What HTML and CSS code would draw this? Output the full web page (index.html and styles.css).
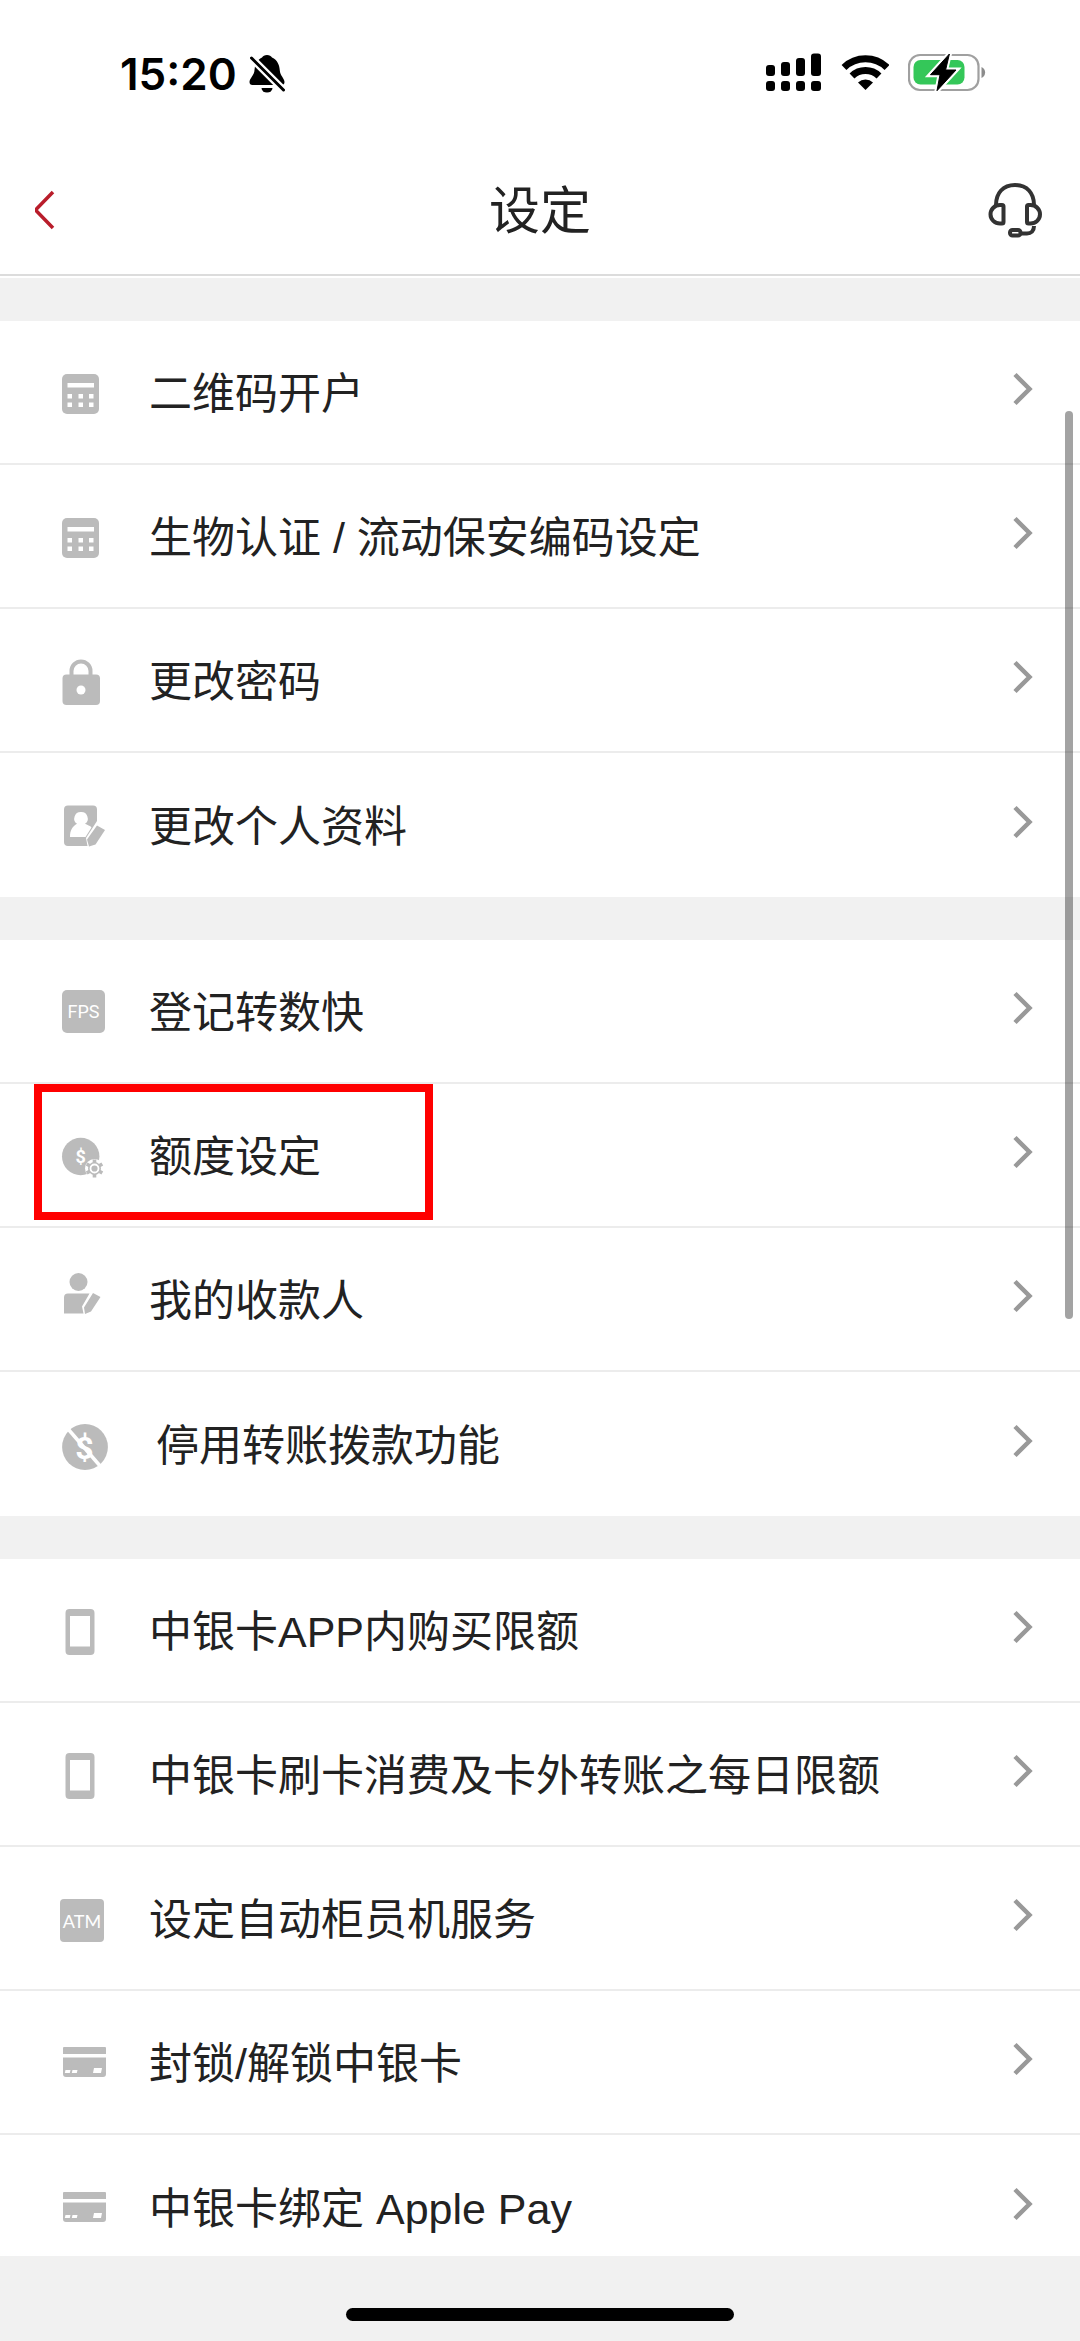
FILE: index.html
```html
<!DOCTYPE html>
<html lang="zh-CN">
<head>
<meta charset="utf-8">
<meta name="viewport" content="width=device-width, initial-scale=1">
<title>设定</title>
<link rel="stylesheet" href="styles.css">
</head>
<body>
<svg class="sprite" aria-hidden="true">
  <symbol id="chevron" viewBox="0 0 24 36"><path d="M3 3.500 17.500 18 3 32.500" fill="none" stroke="#999" stroke-width="4.500"/></symbol>
  <symbol id="calculator" viewBox="0 0 48 52">
    <rect x="2" y="8" width="37" height="40" rx="5" fill="#bbb"/>
    <path fill="#fff" d="M7.500 17h26.500v4.500H7.500zM7.500 28h4.500v4.500H7.500zM18.500 28h4.500v4.500h-4.500zM29 28h4.500v4.500H29zM7.500 36.500h4.500V41H7.500zM18.500 36.500h4.500V41h-4.500zM29 36.500h4.500V41H29z"/>
  </symbol>
  <symbol id="lock" viewBox="0 0 48 52">
    <rect x="2.500" y="20.500" width="37.500" height="30.500" rx="4" fill="#bbb"/>
    <path d="M11.500 24v-7a9.500 9.500 0 0 1 19 0v7" fill="none" stroke="#bbb" stroke-width="4"/>
    <circle cx="21" cy="36" r="4.500" fill="#fff"/>
  </symbol>
  <symbol id="profile" viewBox="0 0 48 52">
    <path fill="#bbb" d="M8 6.500h25a4 4 0 0 1 4 4V22L26 39l1.500 8H8a4 4 0 0 1-4-4V10.500a4 4 0 0 1 4-4z"/>
    <path fill="#bbb" d="M37 26.500 45 31 35.500 45.500 29 47.500l-2-7z"/>
    <path fill="#fff" d="M21 13a6.500 6.500 0 0 1 4 11.800c2 1.200 5.500 2 6.500 3.700L25.500 38H10c0-7 2.500-10.500 7-13.200A6.500 6.500 0 0 1 21 13z"/>
  </symbol>
  <symbol id="payee" viewBox="0 0 48 52">
    <circle cx="18.500" cy="9" r="9" fill="#bbb"/>
    <path fill="#bbb" d="M8 20.500h21.500L22 33.500l1.500 7H4v-16a4 4 0 0 1 4-4zM33 20l7.500 4L31 38.500 25 41l-1-6.500z"/>
  </symbol>
  <symbol id="phone" viewBox="0 0 48 52"><path fill="#bbb" fill-rule="evenodd" d="M9.500 5h21a4 4 0 0 1 4 4v38a4 4 0 0 1-4 4h-21a4 4 0 0 1-4-4V9a4 4 0 0 1 4-4zm.5 7v30.500h20V12z"/></symbol>
  <symbol id="card" viewBox="0 0 48 52">
    <path fill="#bbb" d="M4 11h41a1 1 0 0 1 1 1v6H3v-6a1 1 0 0 1 1-1zM3 21.500h43V38a3 3 0 0 1-3 3H6a3 3 0 0 1-3-3z"/>
    <path fill="#fff" d="M5.500 34h5l-.7 3h-5zM12.500 34h5l-.7 3h-5zM34 32h8l-1 5h-8z"/>
  </symbol>
</svg>

<div class="status-bar">
  <div class="status-left">
    <span class="clock">15:20</span>
    <svg width="36" height="40" viewBox="248 53 36 40" aria-label="静音">
      <path d="M266 55c2.500 0 4 1.200 5 2.500 5.500 2.500 7.500 7.500 7.800 13 .3 5 4.700 8 4.700 11.500 0 2-1 3-3 3h-29c-2 0-3-1-3-3 0-3.500 5-7 5-12 .3-5.500 2.500-10 7.500-12.500 1-1.300 2.500-2.500 5-2.500z"/>
      <path d="M260.500 88h11a5.500 4.500 0 0 1-11 0z"/>
      <path d="M249 56.500 284.500 92" stroke="#fff" stroke-width="7.500"/>
      <path d="M250.500 58 282.500 90" stroke="#000" stroke-width="3" stroke-linecap="round"/>
    </svg>
  </div>
  <div class="status-right">
    <svg width="56" height="40" viewBox="767 53 56 40" aria-label="信号">
      <rect x="767" y="65" width="9" height="11" rx="3"/><rect x="782" y="62" width="9" height="14" rx="3"/><rect x="797" y="58" width="9" height="18" rx="3"/><rect x="812" y="53.500" width="10" height="22.500" rx="3"/>
      <rect x="767" y="81" width="9" height="10" rx="3"/><rect x="782" y="81" width="9" height="10" rx="3"/><rect x="797" y="81" width="9" height="10" rx="3"/><rect x="812" y="81" width="10" height="10" rx="3"/>
    </svg>
    <svg width="48" height="40" viewBox="840 53 48 40" aria-label="Wi-Fi">
      <path fill="none" stroke="#000" stroke-width="7" d="M843 67.500a31 31 0 0 1 43 0M851 76a19.500 19.500 0 0 1 27 0"/>
      <path d="M864.500 90 857 82.500a11 11 0 0 1 15 0z"/>
    </svg>
    <svg width="78" height="40" viewBox="908 53 78 40" aria-label="充电中">
      <rect x="909" y="55" width="69.500" height="35" rx="11" fill="none" stroke="#a0a0a0" stroke-width="2.200"/>
      <path d="M981.500 67a6 6 0 0 1 0 11z" fill="#8c8c8c"/>
      <rect x="913.500" y="60" width="51" height="24.500" rx="7" fill="#34c759"/>
      <path d="M949.400 54 930.500 74.700H940L937 90.700 956 70H945.600z" stroke="#fff" stroke-width="5"/>
      <path d="M949.400 54 930.500 74.700H940L937 90.700 956 70H945.600z" stroke="#000" stroke-linejoin="round"/>
    </svg>
  </div>
</div>

<header class="title-bar">
  <button type="button" class="bar-button" aria-label="返回">
    <svg width="24" height="40" viewBox="3 0 24 40"><path d="M21 2 3.500 20 21 38" fill="none" stroke="#b91d2b" stroke-width="3.500"/></svg>
  </button>
  <h1>设定</h1>
  <button type="button" class="bar-button bar-button-end" aria-label="客户服务">
    <svg width="57" height="56" viewBox="988 182 57 56" fill="none" stroke="#333" stroke-width="4">
      <path d="M996 205c0-12 7-20 19-20s19 8 19 20M1034 226c0 5-3 7.500-7 7.500h-6"/>
      <path d="M1002 205h-2a9.500 9.300 0 0 0 0 18.600h2q1.500 0 1.500-1.500v-15.600q0-1.500-1.500-1.500zM1028.500 205h2a9.500 9.300 0 0 1 0 18.600h-2q-1.500 0-1.500-1.500v-15.600q0-1.500 1.500-1.500z"/>
      <rect x="1010" y="230" width="10.500" height="5.500" rx="2.500"/>
    </svg>
  </button>
</header>

<main class="content">
  <ul class="group">
    <li><a class="row" href="#"><svg class="icon"><use href="#calculator"/></svg><span class="label">二维码开户</span><svg class="chevron"><use href="#chevron"/></svg></a></li>
    <li><a class="row" href="#"><svg class="icon"><use href="#calculator"/></svg><span class="label">生物认证 / 流动保安编码设定</span><svg class="chevron"><use href="#chevron"/></svg></a></li>
    <li><a class="row" href="#"><svg class="icon"><use href="#lock"/></svg><span class="label">更改密码</span><svg class="chevron"><use href="#chevron"/></svg></a></li>
    <li><a class="row" href="#"><svg class="icon"><use href="#profile"/></svg><span class="label">更改个人资料</span><svg class="chevron"><use href="#chevron"/></svg></a></li>
  </ul>
  <ul class="group">
    <li><a class="row" href="#">
      <svg class="icon" viewBox="0 0 48 52">
        <rect x="2" y="5" width="43" height="43" rx="5" fill="#bbb"/>
        <text x="23.500" y="33" text-anchor="middle" class="glyph glyph-fps">FPS</text>
      </svg>
      <span class="label">登记转数快</span><svg class="chevron"><use href="#chevron"/></svg></a></li>
    <li><a class="row row-marked" href="#">
      <svg class="icon" viewBox="0 0 48 52">
        <circle cx="20.700" cy="27.500" r="18.700" fill="#bbb"/>
        <text x="20.700" y="34" text-anchor="middle" class="glyph glyph-dollar">$</text>
        <g transform="translate(34.500 39.500)">
          <circle r="9.500" fill="#fff"/>
          <path id="tooth" stroke="#bbb" stroke-width="3.600" d="M0-9v18M-7.800-4.500l15.600 9M-7.800 4.500l15.600-9"/>
          <circle r="6.500" fill="#bbb"/>
          <circle r="4" fill="none" stroke="#fff" stroke-width="1.800"/>
        </g>
      </svg>
      <span class="label">额度设定</span><svg class="chevron"><use href="#chevron"/></svg></a></li>
    <li><a class="row" href="#"><svg class="icon"><use href="#payee"/></svg><span class="label">我的收款人</span><svg class="chevron"><use href="#chevron"/></svg></a></li>
    <li><a class="row row-wide-icon" href="#">
      <svg class="icon" viewBox="0 0 48 52">
        <circle cx="25" cy="29" r="22.900" fill="#bbb"/>
        <path d="M8.500 11.500 41 49" stroke="#fff" stroke-width="3.500"/>
        <text x="24.500" y="41" text-anchor="middle" class="glyph glyph-big-dollar">$</text>
      </svg>
      <span class="label">停用转账拨款功能</span><svg class="chevron"><use href="#chevron"/></svg></a></li>
  </ul>
  <ul class="group">
    <li><a class="row" href="#"><svg class="icon"><use href="#phone"/></svg><span class="label">中银卡APP内购买限额</span><svg class="chevron"><use href="#chevron"/></svg></a></li>
    <li><a class="row" href="#"><svg class="icon"><use href="#phone"/></svg><span class="label">中银卡刷卡消费及卡外转账之每日限额</span><svg class="chevron"><use href="#chevron"/></svg></a></li>
    <li><a class="row" href="#">
      <svg class="icon" viewBox="0 0 48 52">
        <rect x="0" y="7" width="44" height="43" rx="4" fill="#bbb"/>
        <text x="22" y="36" text-anchor="middle" class="glyph glyph-atm">ATM</text>
      </svg>
      <span class="label">设定自动柜员机服务</span><svg class="chevron"><use href="#chevron"/></svg></a></li>
    <li><a class="row" href="#"><svg class="icon"><use href="#card"/></svg><span class="label">封锁/解锁中银卡</span><svg class="chevron"><use href="#chevron"/></svg></a></li>
    <li><a class="row" href="#"><svg class="icon"><use href="#card"/></svg><span class="label">中银卡绑定 Apple Pay</span><svg class="chevron"><use href="#chevron"/></svg></a></li>
  </ul>
  <div class="scroll-thumb"></div>
</main>

<footer class="home-area"><div class="home-indicator"></div></footer>
</body>
</html>
```

FILE: styles.css
```css
*,
*::before,
*::after {
  box-sizing: border-box;
}

body {
  margin: 0;
  height: 100vh;
  display: flex;
  flex-direction: column;
  background: #fff;
  color: #222;
  font-family: "Liberation Sans", "Noto Sans CJK SC", sans-serif;
}

svg {
  display: block;
  flex: none;
}

.sprite {
  position: absolute;
  width: 0;
  height: 0;
}

/* Status bar */
.status-bar {
  flex: none;
  display: flex;
  justify-content: space-between;
  align-items: center;
  height: 146px;
  padding: 0 94px 0 120px;
  color: #000;
}

.status-left {
  display: flex;
  align-items: center;
  gap: 12px;
}

.status-right {
  display: flex;
  align-items: center;
  gap: 19px;
}

.clock {
  padding-top: 2px;
  font: 600 44px/52px Inter, sans-serif;
}

/* Title bar */
.title-bar {
  flex: none;
  display: grid;
  grid-template-columns: 1fr auto 1fr;
  align-items: center;
  height: 130px;
  padding: 0 35px;
  border-bottom: 2px solid #dcdcdc;
}

.title-bar h1 {
  margin: 0;
  padding-top: 4px;
  font-size: 51px;
  line-height: 64px;
  font-weight: 400;
}

.bar-button {
  justify-self: start;
  padding: 0;
  border: 0;
  background: none;
  cursor: pointer;
}

.bar-button-end {
  justify-self: end;
}

/* Settings list */
.content {
  position: relative;
  flex: 1;
  min-height: 0;
  overflow: hidden;
  display: flex;
  flex-direction: column;
  gap: 43px;
  margin-top: 2px;
  padding-top: 43px;
  background: #f1f1f1;
}

.group {
  flex: none;
  margin: 0;
  padding: 0;
  list-style: none;
  background: #fff;
}

.row {
  position: relative;
  display: flex;
  align-items: center;
  height: 144px;
  padding: 0 44px 0 60px;
  border-bottom: 2px solid #ececec;
  color: inherit;
  text-decoration: none;
}

.group li:last-child .row {
  border-bottom: 0;
}

.icon {
  width: 48px;
  height: 52px;
  margin-right: 41px;
}

.row-wide-icon .icon {
  margin-right: 48px;
}

.label {
  flex: 1;
  padding-top: 3px;
  font-size: 43px;
  line-height: 60px;
  white-space: nowrap;
}

.chevron {
  width: 24px;
  height: 36px;
  margin: 0 0 6px 16px;
}

/* Highlight frame around the marked entry */
.row-marked::after {
  content: "";
  position: absolute;
  left: 34px;
  top: 0;
  width: 399px;
  height: 136px;
  border: 8px solid #f00;
}

.glyph {
  fill: #fff;
}

.glyph-fps {
  font: 400 18px Roboto, sans-serif;
}

.glyph-atm {
  font: 400 18px Lato, sans-serif;
}

.glyph-dollar {
  font: 700 18px Roboto, sans-serif;
}

.glyph-big-dollar {
  font: 700 32px Roboto, sans-serif;
}

.scroll-thumb {
  position: absolute;
  top: 133px;
  right: 7px;
  width: 8px;
  height: 908px;
  border-radius: 4px;
  background: rgba(0, 0, 0, 0.36);
}

/* Home indicator */
.home-area {
  flex: none;
  display: flex;
  justify-content: center;
  align-items: flex-end;
  height: 85px;
  padding-bottom: 20px;
  background: #f1f1f1;
}

.home-indicator {
  width: 36%;
  height: 13px;
  border-radius: 7px;
  background: #000;
}
```
